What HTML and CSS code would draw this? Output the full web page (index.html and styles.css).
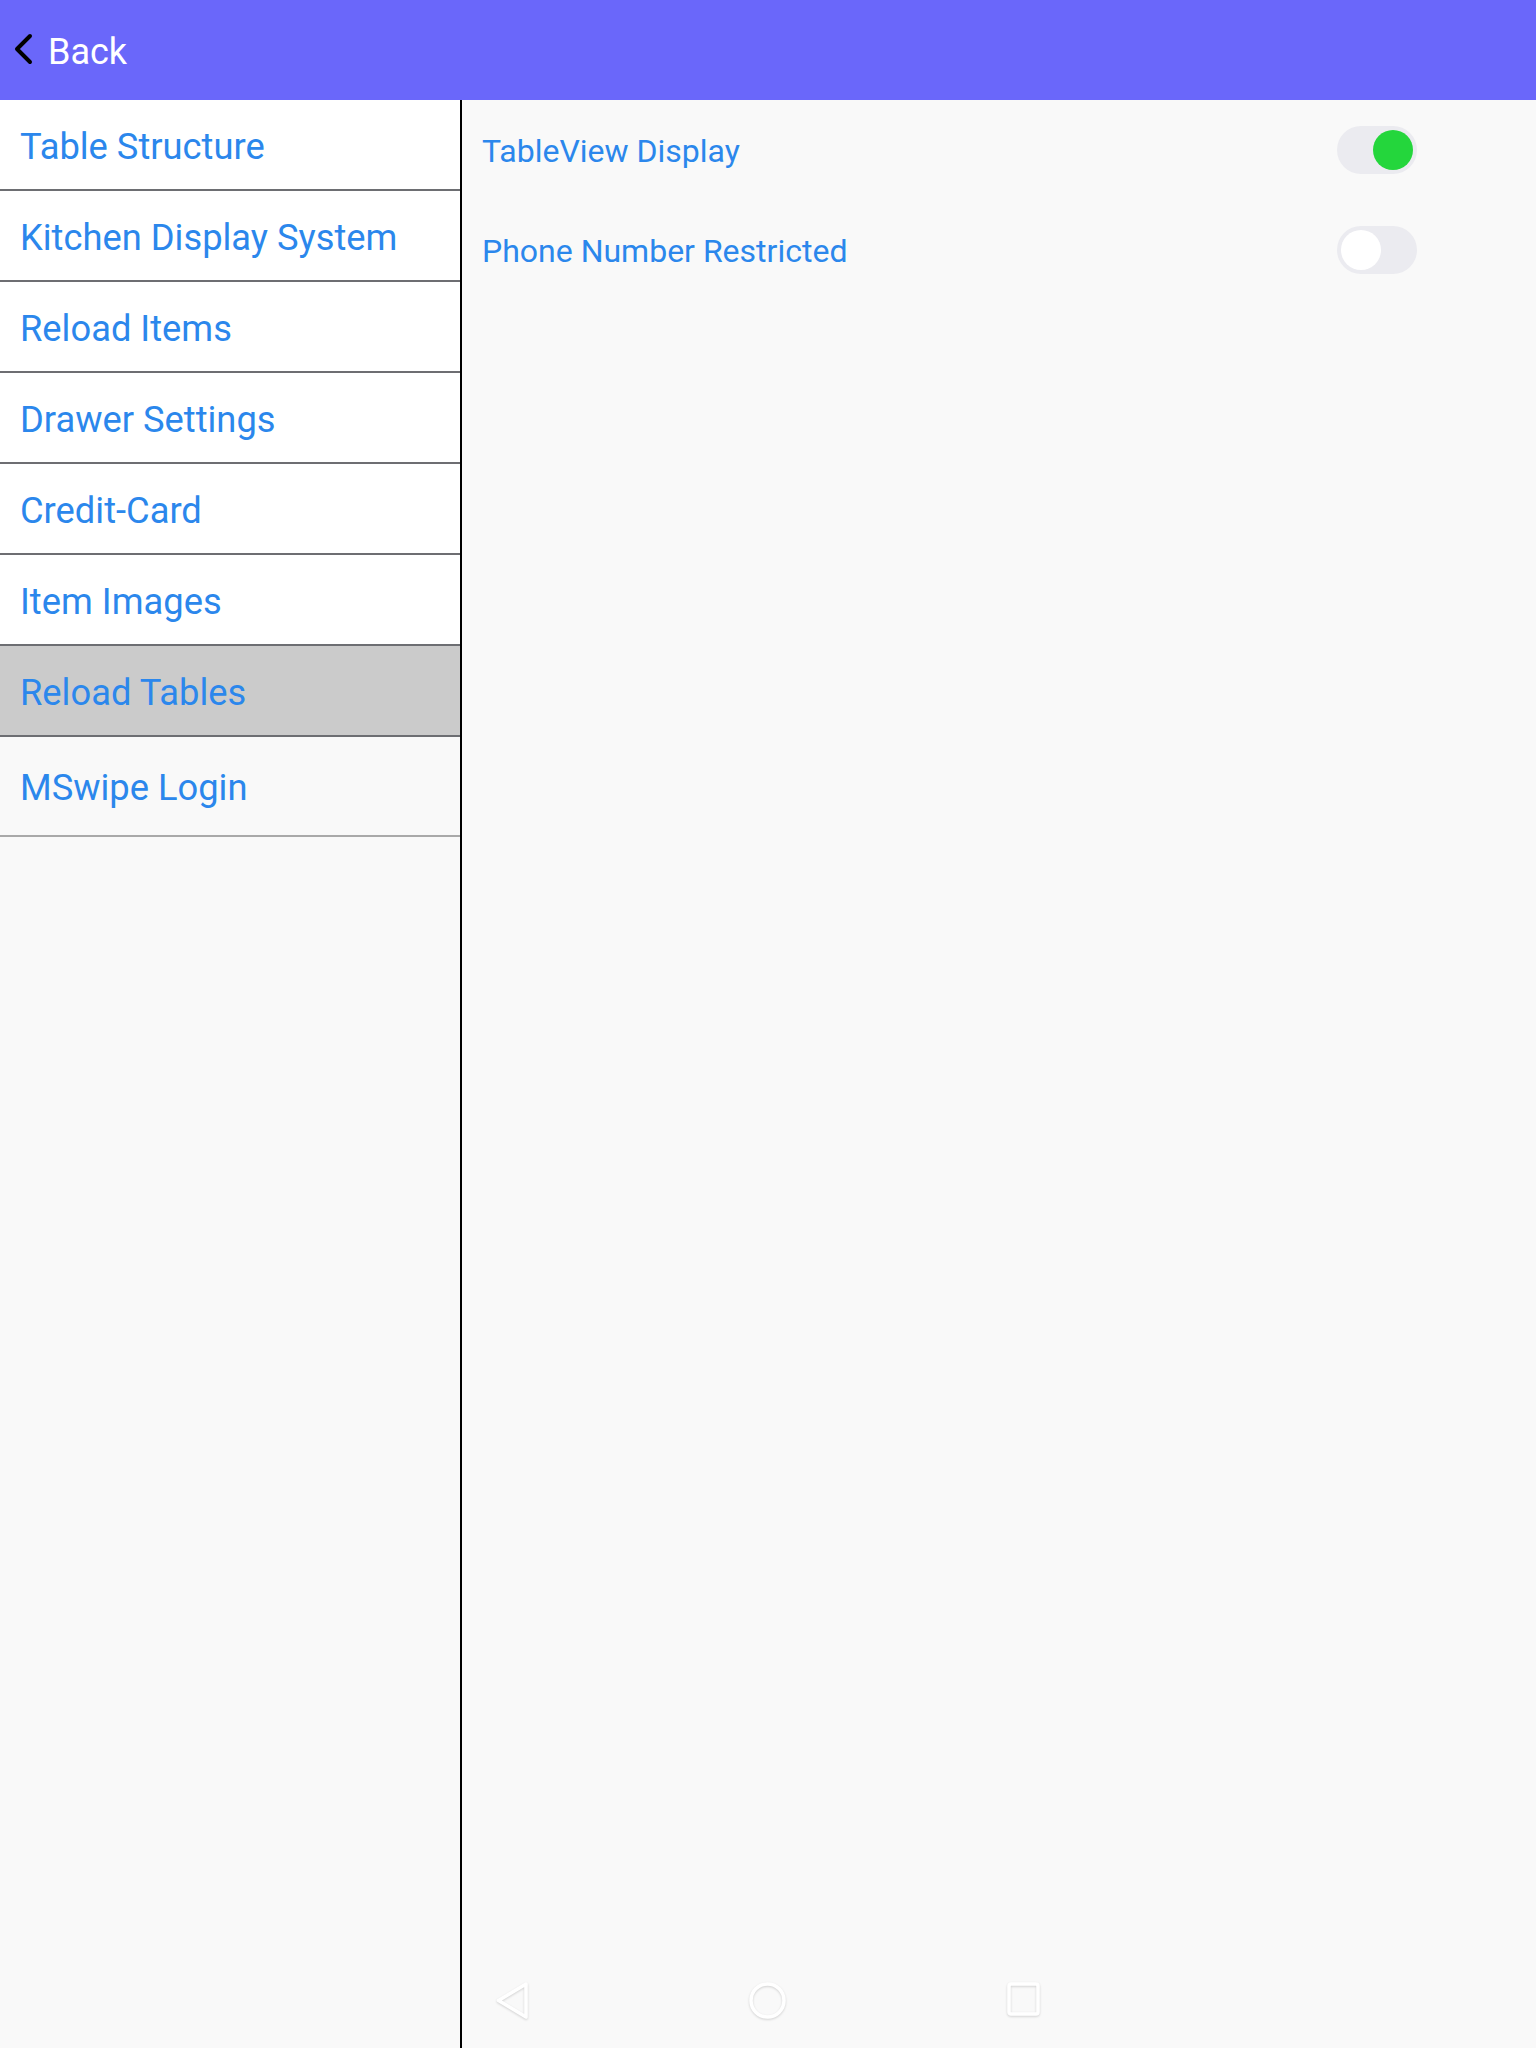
FILE: index.html
```html
<!DOCTYPE html>
<html>
<head>
<meta charset="utf-8">
<link rel="stylesheet" href="styles.css">
</head>
<body>
<header class="topbar">
  <svg class="back-icon" width="24" height="34" viewBox="0 0 24 34"><polyline points="17,3 4,16 17,29" fill="none" stroke="#000" stroke-width="4" stroke-linecap="round" stroke-linejoin="round"/></svg>
  <span class="back-label">Back</span>
</header>
<div class="layout">
  <nav class="sidebar">
    <div class="menu-item">Table Structure</div>
    <div class="menu-item">Kitchen Display System</div>
    <div class="menu-item">Reload Items</div>
    <div class="menu-item">Drawer Settings</div>
    <div class="menu-item">Credit-Card</div>
    <div class="menu-item">Item Images</div>
    <div class="menu-item selected">Reload Tables</div>
    <div class="menu-item last">MSwipe Login</div>
  </nav>
  <main class="content">
    <div class="setting-row">
      <span class="setting-label">TableView Display</span>
      <div class="toggle on"><div class="knob"></div></div>
    </div>
    <div class="setting-row">
      <span class="setting-label">Phone Number Restricted</span>
      <div class="toggle"><div class="knob"></div></div>
    </div>
  </main>
</div>
<div class="sysnav">
  <svg class="nav-back" width="32" height="37" viewBox="0 0 32 37"><polygon points="30,2 2.5,18.5 30,35" fill="none" stroke="#fff" stroke-width="3.5" stroke-linejoin="round"/></svg>
  <svg class="nav-home" width="37" height="37" viewBox="0 0 37 37"><circle cx="18.5" cy="18.5" r="16.5" fill="none" stroke="#fff" stroke-width="3.5"/></svg>
  <svg class="nav-recent" width="33" height="35" viewBox="0 0 33 35"><rect x="2" y="2" width="29" height="30" rx="2" fill="none" stroke="#fff" stroke-width="3.5"/></svg>
</div>
</body>
</html>
```
FILE: styles.css
```css
* { box-sizing: border-box; }
html, body {
  margin: 0;
  padding: 0;
}
body {
  width: 1536px;
  height: 2048px;
  background: #f9f9f9;
  font-family: Roboto, "Noto Sans", "Liberation Sans", sans-serif;
  position: relative;
  overflow: hidden;
}
.topbar {
  height: 100px;
  background: #6a67fa;
  display: flex;
  align-items: center;
  padding-left: 13px;
  gap: 11px;
}
.back-icon {
  display: block;
  margin-top: -1px;
}
.back-label {
  color: #ffffff;
  font-size: 36px;
  line-height: 1;
  margin-top: 3px;
}
.layout {
  display: flex;
  height: 1948px;
}
.sidebar {
  width: 462px;
  flex: none;
  border-right: 2px solid #000;
  display: flex;
  flex-direction: column;
}
.menu-item {
  height: 91px;
  background: #ffffff;
  border-bottom: 2px solid #6d6e72;
  display: flex;
  align-items: center;
  padding-left: 20px;
  padding-top: 5px;
  color: #2b87ec;
  font-size: 36.3px;
  line-height: 1;
}
.menu-item.selected {
  background: #cbcbcb;
}
.menu-item.last {
  height: 100px;
  background: #f9f9f9;
  border-bottom: 2px solid #a9a9a9;
}
.content {
  flex: 1;
  display: flex;
  flex-direction: column;
  padding-left: 20px;
  padding-right: 119px;
}
.setting-row {
  height: 100px;
  display: flex;
  align-items: center;
  justify-content: space-between;
}
.setting-label {
  color: #2b87ec;
  font-size: 32px;
  line-height: 1;
  padding-top: 1px;
}
.toggle {
  width: 80px;
  height: 48px;
  border-radius: 24px;
  background: #ebebf0;
  display: flex;
  align-items: center;
  padding: 0 4px;
}
.toggle .knob {
  width: 40px;
  height: 40px;
  border-radius: 50%;
  background: #ffffff;
}
.toggle.on {
  justify-content: flex-end;
}
.toggle.on .knob {
  background: #24d63c;
}
.sysnav {
  position: absolute;
  left: 496px;
  top: 1982px;
  display: flex;
  align-items: flex-start;
  gap: 221px;
}
.sysnav svg {
  display: block;
  filter: drop-shadow(0 1px 1px rgba(0,0,0,0.16));
}
```
